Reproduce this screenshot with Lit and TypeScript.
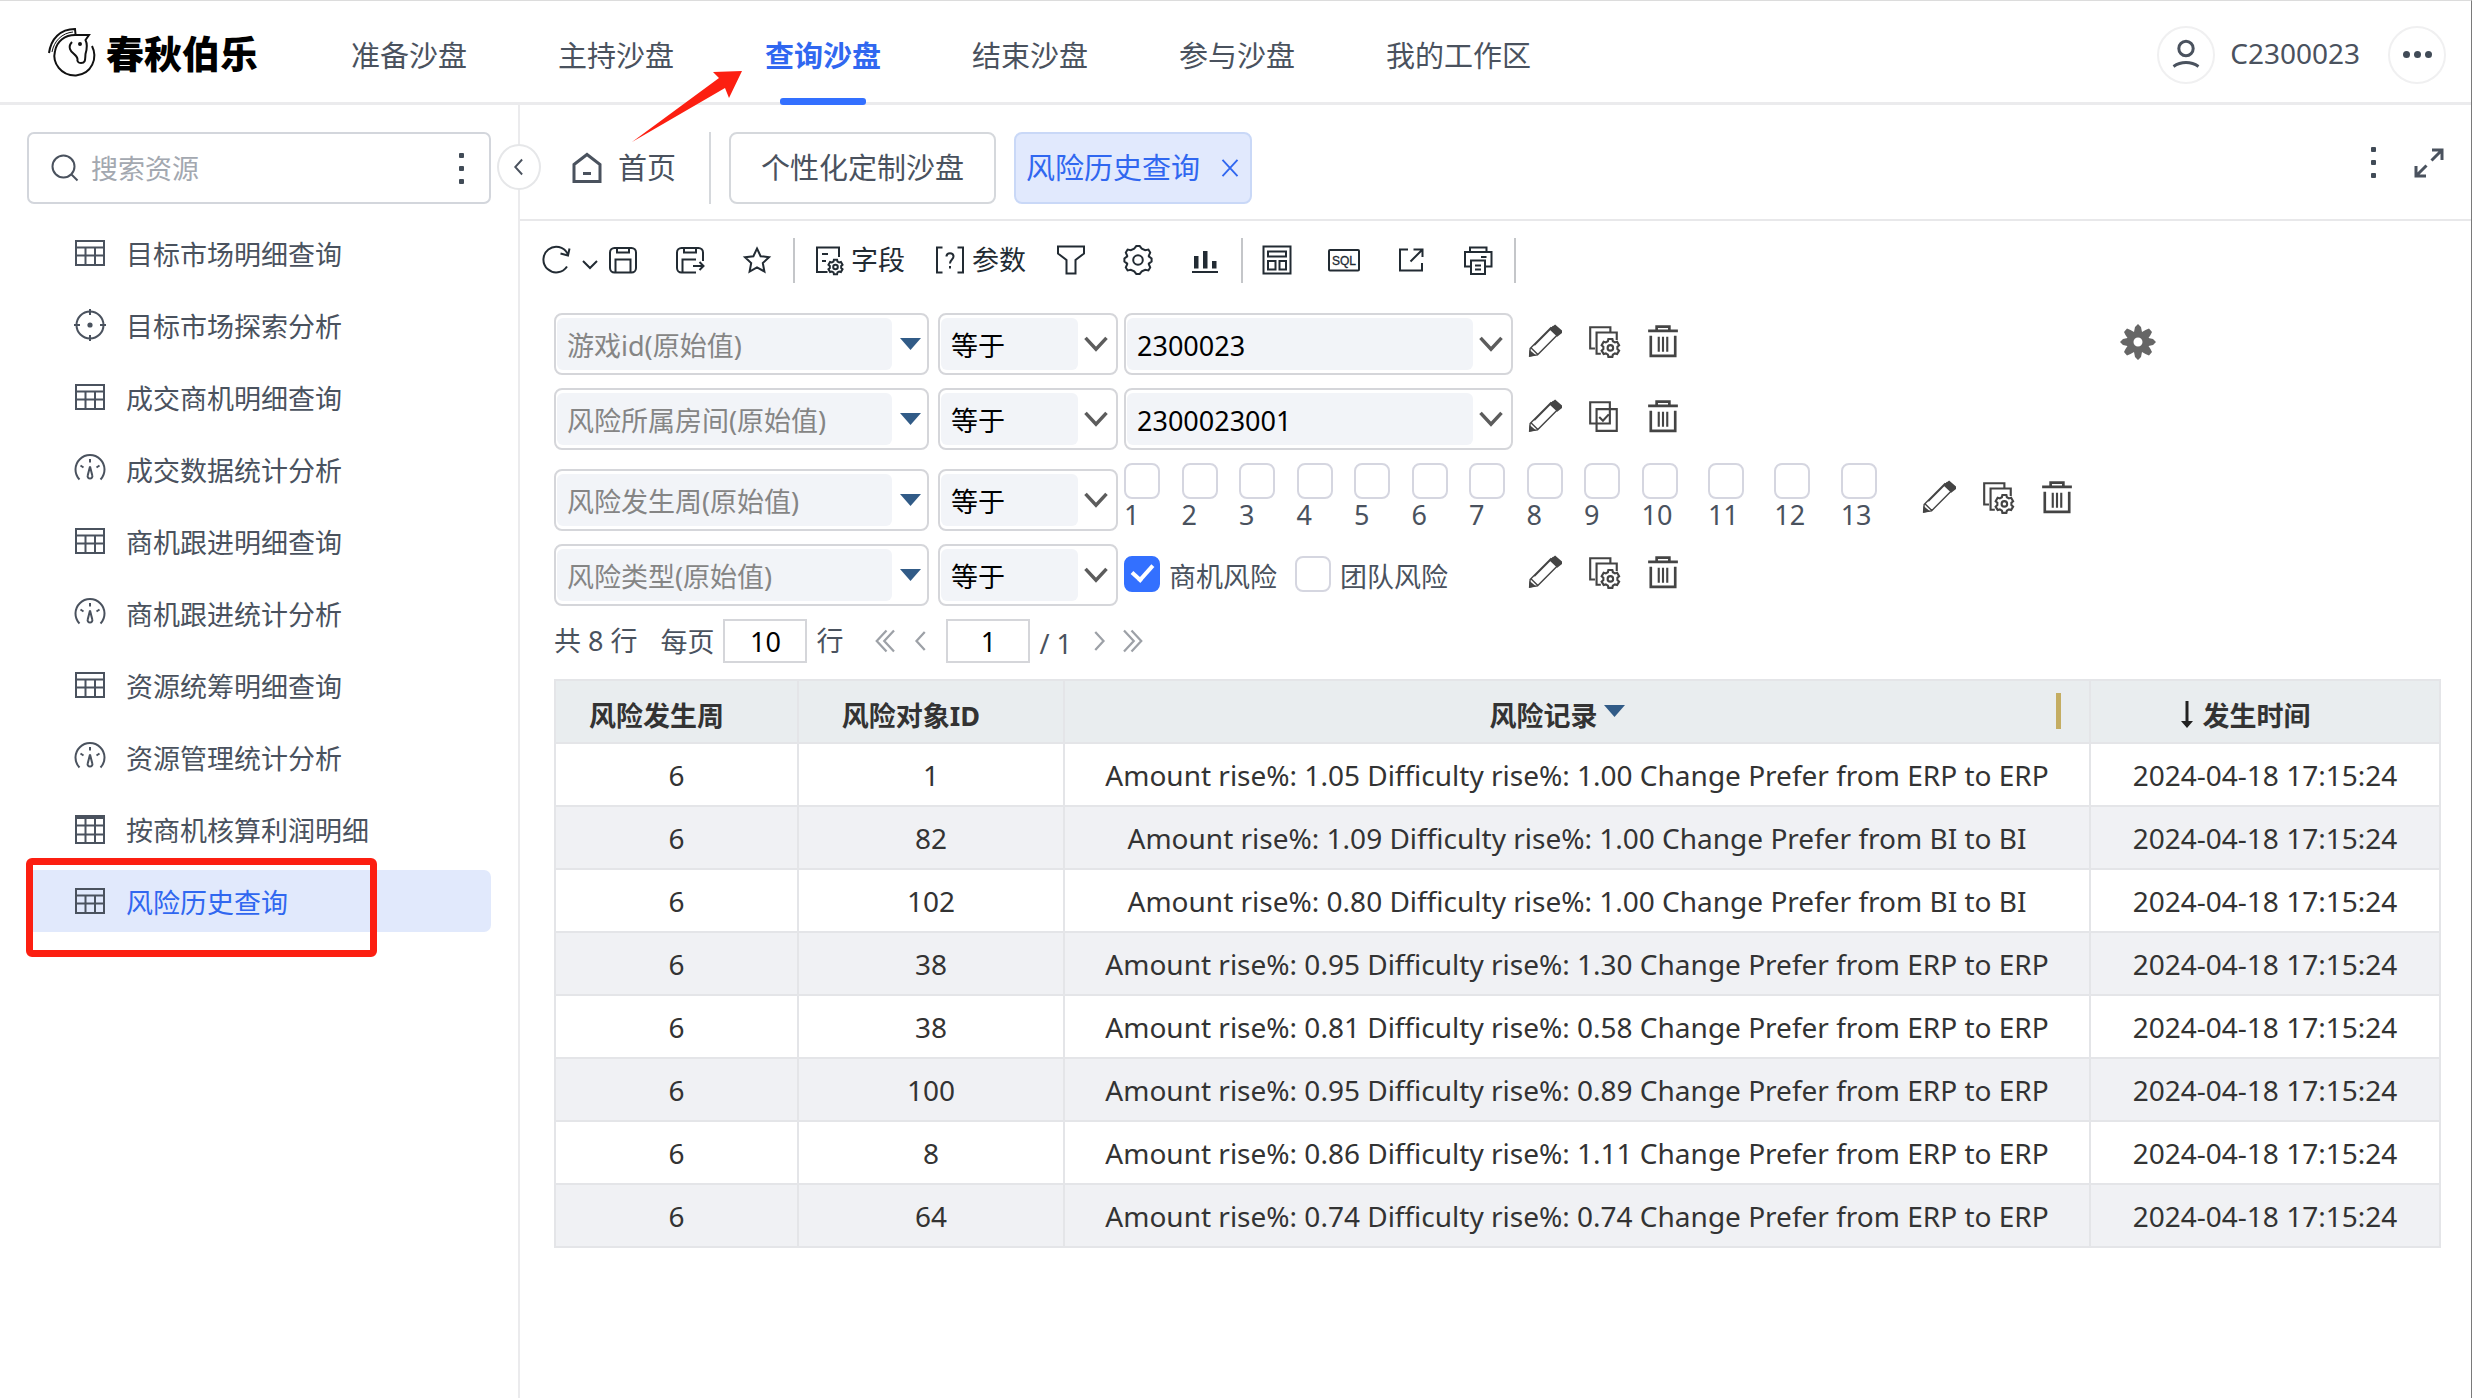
import { LitElement, html, css, svg, nothing } from "lit";
import type { TemplateResult, SVGTemplateResult } from "lit";
import { customElement, state } from "lit/decorators.js";
import { classMap } from "lit/directives/class-map.js";

const GEAR =
  "M12.2 4.6 L14.3 2 H17.7 L19.8 4.6 L23.2 6.2 L26.4 5.6 L28.2 8.6 L26.8 11.8 V12.4 L29.6 14.4 V17.6 L26.8 19.6 V20.2 L28.2 23.4 L26.4 26.4 L23.2 25.8 L19.8 27.4 L17.7 30 H14.3 L12.2 27.4 L8.8 25.8 L5.6 26.4 L3.8 23.4 L5.2 20.2 V19.6 L2.4 17.6 V14.4 L5.2 12.4 V11.8 L3.8 8.6 L5.6 5.6 L8.8 6.2 Z";

const cog = (cx: number, cy: number, r: number): string => {
  const pts: string[] = [];
  for (let i = 0; i < 6; i++) {
    const base = (i * Math.PI) / 3;
    for (const [da, k] of [[-0.36, 0.78], [-0.22, 1], [0.22, 1], [0.36, 0.78]]) {
      pts.push(`${(cx + Math.sin(base + da) * r * k).toFixed(2)} ${(cy - Math.cos(base + da) * r * k).toFixed(2)}`);
    }
  }
  return "M" + pts.join(" L") + " Z";
};

const ICONS: Record<string, SVGTemplateResult> = {
  table: svg`<path d="M2 4H30V28H2ZM2 10.500H30M2 18.500H30M11.500 10.500V28M21 10.500V28"/>`,
  grid: svg`<path d="M2 3H30V30H2ZM2 12.500H30M2 21.500H30M11.500 5V30M21 5V30"/><path d="M2 4H30" stroke-width="4"/>`,
  target: svg`<circle cx="16" cy="16" r="13.500"/><path d="M16 0V6M16 26V32M0 16H6M26 16H32"/><circle cx="16" cy="16" r="2.600" fill="currentColor" stroke="none"/>`,
  gauge: svg`<path d="M5.500 26.500A14.500 14.500 0 1 1 26.500 26.500M16 6V9.500M6.500 12.500L9.500 14.500M25.500 12.500L22.500 14.500"/><path d="M16 13.500L18.300 22.500A2.400 2.400 0 1 1 13.700 22.500Z"/>`,
  search: svg`<circle cx="14.500" cy="14.500" r="11"/><path d="M22.500 22.500L28.500 28.500"/>`,
  user: svg`<circle cx="16" cy="9.500" r="7.200"/><path d="M3.500 27.500C11 22.300 21 22.300 28.500 27.500"/>`,
  home: svg`<path d="M3 12.500L16 2.500L29 12.500V29.500H3ZM12 21.500H20"/>`,
  expand: svg`<path d="M19 3H29V13M29 3L18.500 13.500M13 29H3V19M3 29L13.500 18.500"/>`,
  refresh: svg`<path d="M27 22.500A12.800 12.800 0 1 1 27.500 9.500M29.500 4.500L28 11.500L20.500 9.500"/>`,
  save: svg`<rect x="3" y="4" width="26" height="24.500" rx="4.500"/><path d="M10 4V8.500H22V4M8.500 28V15.500H23.500V28"/>`,
  saveAs: svg`<path d="M22 28.500H7.500A4.500 4.500 0 0 1 3 24V8.500A4.500 4.500 0 0 1 7.500 4H24.500A4.500 4.500 0 0 1 29 8.500V17M10 4V8.500H22V4M8.500 28V15.500H22M19 22H29.500M25.500 18L29.500 22L25.500 26"/>`,
  star: svg`<path d="M16 4.500L19.600 12.200L28 13.200L21.800 19L23.400 27.500L16 23.300L8.600 27.500L10.200 19L4 13.200L12.400 12.200Z"/>`,
  fields: svg`<path d="M14.500 28H4V3.500H26V13M9 10H15M9 17H13"/><path d="${cog(22.5, 23, 7.4)}"/><circle cx="22.500" cy="23" r="2.300"/>`,
  params: svg`<path d="M8.500 3.500H3V28.500H8.500M23.500 3.500H29V28.500H23.500M12.500 12.500C12.500 8 19.500 8 19.500 12.500C19.500 15.500 16 15.500 16 19.500M16 22V24.500"/>`,
  filter: svg`<path d="M3 2.500H29V9.500L20.500 16V29.500H11.500V16L3 9.500Z"/>`,
  gear: svg`<path d="${GEAR}"/><circle cx="16" cy="16" r="4.800"/>`,
  chart: svg`<path d="M3 28H29"/><path d="M5 12H9.500V24.500H5ZM14 7H18.500V24.500H14ZM23 17H27.500V24.500H23Z" fill="currentColor" stroke="none"/>`,
  layout: svg`<path d="M2.500 2.500H29.500V29.500H2.500ZM7 7.500H25V12.500H7ZM7 17H14.500V25.500H7ZM18.500 17H25V25.500H18.500Z"/>`,
  sql: svg`<rect x="1" y="6" width="30" height="20.500" rx="1"/><text x="16" y="20.500" text-anchor="middle" font-size="12" font-family="Liberation Sans, sans-serif" fill="currentColor" stroke-width="0.300">SQL</text>`,
  share: svg`<path d="M13 5.500H5V26.500H27V19M18.500 5.500H27.500V13M27 6L15.500 17.500"/>`,
  print: svg`<path d="M8 8V3.500H24.500V8M9 22.500H3V8H29.500V22.500H23M19 13H24.500M9 16.500H23V30H9ZM13 21.500H19M13 25.500H19"/>`,
  pencil: svg`<path d="M2 23L21.500 3.500L28.500 9.500L9 29L1.500 30Z M3 22.500L9.500 29M6 20L24 2" stroke-width="1.300"/><path d="M20 5L25.500 0.500L32 6V8.500L27.500 12Z M1.500 24.500L7.500 29.500L1 31Z" fill="currentColor" stroke="none"/>`,
  copyGear: svg`<path d="M7.500 23H3V3H22V7.500M13 28H9V8H28V15"/><path d="${cog(22, 22.5, 8.6)}"/><circle cx="22" cy="22.500" r="2.600"/>`,
  copyCheck: svg`<path d="M3 3H21.500V23H3ZM9 9.500H28V30H9ZM11.500 17L15 20.500L20.500 14.500"/>`,
  trash: svg`<path d="M2 6.500H30M10 6V2.500H22V6M4.500 11V30H27.500V11" stroke-width="2.500"/><path d="M12 12V26M16 12V26M20 12V26"/>`,
  chevronDown: svg`<path d="M4 9L16 22L28 9"/>`,
  chevronLeft: svg`<path d="M21 4L10 16L21 28"/>`,
  chevronRight: svg`<path d="M11 4L22 16L11 28"/>`,
  first: svg`<path d="M18 2L5 16L18 30M28 2L15 16L28 30"/>`,
  last: svg`<path d="M4 2L17 16L4 30M14 2L27 16L14 30"/>`,
  close: svg`<path d="M4 3L28 29M28 3L4 29"/>`,
};

const icon = (name: string, cls = ""): TemplateResult =>
  html`<svg class="icon ${cls}" viewBox="0 0 32 32" aria-hidden="true">${ICONS[name]}</svg>`;

const MENU = ["准备沙盘", "主持沙盘", "查询沙盘", "结束沙盘", "参与沙盘", "我的工作区"];

const RESOURCES: [string, string][] = [
  ["table", "目标市场明细查询"],
  ["target", "目标市场探索分析"],
  ["table", "成交商机明细查询"],
  ["gauge", "成交数据统计分析"],
  ["table", "商机跟进明细查询"],
  ["gauge", "商机跟进统计分析"],
  ["table", "资源统筹明细查询"],
  ["gauge", "资源管理统计分析"],
  ["grid", "按商机核算利润明细"],
  ["table", "风险历史查询"],
];

const erp = (a: string, d: string) => `Amount rise%: ${a} Difficulty rise%: ${d} Change Prefer from ERP to ERP`;
const bi = (a: string, d: string) => `Amount rise%: ${a} Difficulty rise%: ${d} Change Prefer from BI to BI`;

const ROWS: [number, string][] = [
  [1, erp("1.05", "1.00")],
  [82, bi("1.09", "1.00")],
  [102, bi("0.80", "1.00")],
  [38, erp("0.95", "1.30")],
  [38, erp("0.81", "0.58")],
  [100, erp("0.95", "0.89")],
  [8, erp("0.86", "1.11")],
  [64, erp("0.74", "0.74")],
];

@customElement("app-root")
export class AppRoot extends LitElement {
  @state() private menu = "查询沙盘";
  @state() private resource = "风险历史查询";

  static styles = css`
    :host {
      display: flex;
      flex-direction: column;
      min-height: 100vh;
      box-sizing: border-box;
      border-top: 1px solid #dcdcdc;
      border-right: 1px solid #7a7a7a;
      background: #fff;
      color: #4a525e;
      font-family: "Noto Sans", "Noto Sans CJK SC", sans-serif;
      font-size: 27px;
      line-height: 36px;
    }
    * { box-sizing: border-box; }
    button, input, select { font: inherit; color: inherit; margin: 0; }
    button { padding: 0; border: 0; background: none; cursor: pointer; display: inline-flex; align-items: center; justify-content: center; }
    a { color: inherit; text-decoration: none; }
    .icon { width: 32px; height: 32px; flex: none; fill: none; stroke: currentColor; stroke-width: 2; display: block; }
    .icon.s28 { width: 28px; height: 28px; }
    .icon.s24 { width: 24px; height: 24px; }
    .icon.s20 { width: 20px; height: 20px; }
    .icon.bold { stroke-width: 3; }

    .header { display: flex; align-items: center; height: 104px; padding: 0 25px 0 48px; border-bottom: 3px solid #ebebed; position: relative; }
    .brand { display: flex; align-items: center; gap: 8px; width: 303px; color: #000; font-size: 38px; line-height: 56px; font-weight: 900; font-family: "Noto Sans CJK SC", sans-serif; }
    .brand-mark { width: 50px; height: 50px; fill: none; stroke: #111; stroke-width: 2; }
    .menu { display: flex; align-self: stretch; gap: 91px; flex: 1; font-size: 29px; }
    .menu a { display: flex; flex-direction: column; align-items: center; padding-top: 35px; line-height: 40px; }
    .menu a.active { color: #3067f0; font-weight: 700; }
    .menu a.active::after { content: ""; flex: none; width: 86px; height: 7px; margin-top: 22px; border-radius: 3px; background: #3370ff; }
    .account { display: flex; align-items: center; font-size: 28px; padding-top: 6px; }
    .round { width: 58px; height: 58px; border: 2px solid #f0f0f1; border-radius: 50%; display: flex; align-items: center; justify-content: center; }
    .account-name { padding: 0 28px 4px 15px; }
    .arrow { position: absolute; left: 628px; top: 64px; width: 120px; height: 84px; z-index: 2; fill: #fc1f11; }

    .body { display: flex; flex: 1; }
    .sidebar { width: 520px; flex: none; border-right: 2px solid #ebebed; padding: 27px 27px 0; position: relative; }
    .search { display: flex; align-items: center; gap: 10px; height: 72px; padding: 0 20px 0 20px; border: 2px solid #d3d6dc; border-radius: 7px; }
    .search input { flex: 1; min-width: 0; border: 0; outline: 0; background: none; padding: 2px 0 0; }
    .search input::placeholder { color: #a3a8b0; opacity: 1; }
    .dots { display: flex; flex-direction: column; gap: 8px; width: 16px; align-items: center; }
    .dots i { width: 5px; height: 5px; border-radius: 1px; background: #414b57; }
    .dots.row { flex-direction: row; width: auto; gap: 4px; }
    .dots.row i { width: 7px; height: 7px; border-radius: 50%; }
    .collapse { position: absolute; right: -23px; top: 39px; width: 44px; height: 46px; border: 2px solid #e6e7e9; border-radius: 50%; background: #fff; z-index: 1; }
    .resources { list-style: none; margin: 18px 0 0; padding: 0; display: flex; flex-direction: column; gap: 10px; }
    .resources li { position: relative; }
    .resources a { display: flex; align-items: center; gap: 20px; height: 62px; padding-left: 47px; border-radius: 7px; }
    .resources span { padding-top: 3px; }
    .resources a.active { background: #e1e9fc; }
    .resources a.active span { color: #3067f0; }
    .mark { position: absolute; left: -1px; top: -12px; width: 351px; height: 99px; border: 7px solid #fc1f11; border-radius: 6px; pointer-events: none; }

    .main { flex: 1; min-width: 0; }
    .tabs { display: flex; align-items: center; height: 116px; padding: 11px 26px 0 51px; border-bottom: 2px solid #e8e8ea; font-size: 29px; }
    .tab-home { display: flex; align-items: center; gap: 15px; padding-right: 33px; height: 72px; border-right: 2px solid #d5d8dc; margin-right: 18px; }
    .tab { display: flex; align-items: center; height: 72px; border: 2px solid #d5d8dc; border-radius: 8px; padding: 0 30px; margin-right: 18px; }
    .tab.active { background: #e1e9fd; border-color: #c9d8f7; color: #3067f0; padding: 0 10px; gap: 20px; }
    .tab-tools { margin-left: auto; display: flex; align-items: flex-start; gap: 32px; height: 42px; }

    .toolbar { display: flex; align-items: center; height: 78px; padding-left: 20px; color: #222b33; }
    .group { display: flex; align-items: center; gap: 35px; }
    .group.text { gap: 29px; margin-right: 29px; }
    .text button { gap: 6px; }
    .refresh { gap: 10px; margin-right: -26px; }
    .rule { width: 2px; height: 45px; background: #c4c6c9; margin: 0 18px 0 20px; }

    .content { padding: 14px 30px 40px 34px; }
    .filters { display: flex; flex-direction: column; gap: 13px; }
    .filter { display: flex; align-items: flex-end; }
    .box { display: flex; align-items: center; height: 62px; border: 2px solid #d5d6da; border-radius: 8px; padding: 4px 6px 4px 1px; gap: 4px; }
    .box select { flex: 1; min-width: 0; height: 52px; appearance: none; border: 0; border-radius: 6px; outline: 0; background: #f2f4f8; padding: 4px 0 0 10px; color: #000; }
    .box.field { width: 375px; margin-right: 9px; gap: 8px; }
    .box.field select { color: #858585; }
    .box.op { width: 180px; margin-right: 6px; }
    .box .icon { color: #5c5c5c; stroke-width: 4; }
    .tri { width: 21px; height: 12px; fill: #315b87; flex: none; }
    .value { width: 389px; }
    .value .box { width: 100%; }
    .actions { display: flex; gap: 25px; height: 62px; align-items: center; padding: 0 0 6px 15px; color: #444; }
    .actions .icon { width: 34px; height: 34px; }
    .settings { margin-left: auto; margin-right: 285px; height: 62px; padding-bottom: 4px; }
    .settings svg { width: 36px; height: 36px; fill: #666; }
    .weeks { display: grid; width: 783px; grid-template-columns: repeat(9, 13fr) repeat(4, 15fr); }
    .weeks label { display: flex; flex-direction: column; line-height: 32px; }
    .types { display: flex; align-items: center; height: 62px; gap: 18px; }
    .types label { display: flex; align-items: center; gap: 9px; }
    .types span { padding-top: 3px; }
    .types .check { margin-bottom: 3px; }
    .check { appearance: none; width: 36px; height: 36px; border: 2px solid #d5d6e0; border-radius: 8px; background: #fff; display: grid; place-items: center; }
    .check:checked { background: #3370ff; border-color: #3370ff; }
    .check:checked::after { content: ""; width: 9px; height: 17px; border: solid #fff; border-width: 0 4px 4px 0; transform: translateY(-3px) rotate(42deg); }

    .pager { display: flex; align-items: center; height: 44px; margin: 13px 0 16px; }
    .pager input { width: 84px; height: 44px; border: 2px solid #d5d6da; text-align: center; padding: 0; color: #000; margin: 0 9px; outline: 0; }
    .pager .per { margin-left: 23px; }
    .pager .total { padding-top: 6px; }
    .pager button { color: #9da1a7; }
    .pager .nav { display: flex; gap: 12px; margin-left: 30px; margin-right: 4px; }
    .pager .nav.end { margin-left: 15px; gap: 10px; }

    table { width: 100%; border-collapse: collapse; table-layout: fixed; color: #333; }
    .c1 { width: 243px; }
    .c2 { width: 266px; }
    .c4 { width: 350px; }
    th, td { height: 63px; padding: 0; border: 2px solid #e4e5e8; text-align: center; }
    td { font-size: 28px; }
    th { background: #e9edef; padding: 8px 40px 0 0; position: relative; font-weight: 700; }
    tbody tr:nth-child(even) { background: #f0f1f4; }
    th .tri { margin-left: 6px; vertical-align: 9px; }
    .sort { width: 14px; height: 28px; fill: none; stroke: #222; stroke-width: 3; vertical-align: -3px; margin-right: 9px; }
    .grip { position: absolute; right: 28px; top: 12px; width: 5px; height: 36px; background: #c4ad62; }
  `;

  private tri = () => html`<svg class="tri" viewBox="0 0 21 12" aria-hidden="true"><path d="M0 0H21L10.5 12Z" /></svg>`;

  private tool(name: string, label: string) {
    return html`<button aria-label=${label}>${icon(name)}</button>`;
  }

  private filter(field: string, value: unknown, middle: string, extra: unknown = nothing) {
    return html`
      <div class="filter">
        <label class="box field"><select aria-label="字段"><option>${field}</option></select>${this.tri()}</label>
        <label class="box op"><select aria-label="运算符"><option>等于</option></select>${icon("chevronDown", "s28")}</label>
        ${value}
        <div class="actions">
          ${this.tool("pencil", "编辑")}${this.tool(middle, "选项")}${this.tool("trash", "删除")}
        </div>
        ${extra}
      </div>`;
  }

  private dropdown(value: string) {
    return html`<div class="value"><label class="box"><select aria-label="值"><option>${value}</option></select>${icon("chevronDown", "s28")}</label></div>`;
  }

  render() {
    return html`
      <header class="header">
        <div class="brand">
          <svg class="brand-mark" viewBox="0 0 50 50" aria-hidden="true">
            <path d="M1 26C3 12 12 2 27 2L27.500 7" />
            <path d="M4 25C6 14 14 6 25 5" stroke-width="1" />
            <path d="M44 19C50 31 44 47 28 48.500C13 49 4 36 7 24C9 14 17 8 27 8H41L37.500 13C40 18 39 22 37.500 27C37 32 38 36 33 36C30 36 29 34 29.500 32C29 28 23 26 22 22C21 19 22 17 24 15" />
            <circle cx="32" cy="17" r="1" />
          </svg>
          <span>春秋伯乐</span>
        </div>
        <nav class="menu">
          ${MENU.map((m) => html`<a href="#" class=${classMap({ active: m === this.menu })} @click=${(e: Event) => { e.preventDefault(); this.menu = m; }}>${m}</a>`)}
        </nav>
        <div class="account">
          <span class="round">${icon("user", "bold")}</span>
          <span class="account-name">C2300023</span>
          <button class="round" aria-label="更多"><span class="dots row"><i></i><i></i><i></i></span></button>
        </div>
        <svg class="arrow" viewBox="0 0 120 84" aria-hidden="true"><path d="M4 77L91 13L85 7L114 6L101 33L97 23Z" /></svg>
      </header>
      <div class="body">
        <aside class="sidebar">
          <div class="search">
            ${icon("search")}
            <input type="text" placeholder="搜索资源" aria-label="搜索资源" />
            <button class="dots" aria-label="选项"><i></i><i></i><i></i></button>
          </div>
          <button class="collapse" aria-label="收起">${icon("chevronLeft", "s20 bold")}</button>
          <ul class="resources">
            ${RESOURCES.map(([i, name]) => html`
              <li>
                <a href="#" class=${classMap({ active: name === this.resource })} @click=${(e: Event) => { e.preventDefault(); this.resource = name; }}>${icon(i)}<span>${name}</span></a>
                ${name === "风险历史查询" ? html`<div class="mark"></div>` : nothing}
              </li>`)}
          </ul>
        </aside>
        <main class="main">
          <div class="tabs">
            <a class="tab-home" href="#">${icon("home", "bold")}<span>首页</span></a>
            <a class="tab" href="#">个性化定制沙盘</a>
            <div class="tab active"><span>风险历史查询</span><button aria-label="关闭">${icon("close", "s20 bold")}</button></div>
            <div class="tab-tools">
              <button class="dots" aria-label="更多"><i></i><i></i><i></i></button>
              <button aria-label="全屏">${icon("expand", "bold")}</button>
            </div>
          </div>
          <div class="toolbar">
            <div class="group">
              <button class="refresh" aria-label="刷新">${icon("refresh")}<svg class="icon" style="width:16px" viewBox="0 0 16 32"><path d="M1 17L8 24L15 17" /></svg></button>
              ${this.tool("save", "保存")}${this.tool("saveAs", "另存为")}${this.tool("star", "收藏")}
            </div>
            <div class="rule"></div>
            <div class="group text">
              <button>${icon("fields")}字段</button>
              <button>${icon("params")}参数</button>
            </div>
            <div class="group">
              ${this.tool("filter", "过滤")}${this.tool("gear", "设置")}${this.tool("chart", "图表")}
            </div>
            <div class="rule"></div>
            <div class="group">
              ${this.tool("layout", "布局")}${this.tool("sql", "SQL")}${this.tool("share", "导出")}${this.tool("print", "打印")}
            </div>
            <div class="rule"></div>
          </div>
          <div class="content">
            <div class="filters">
              ${this.filter("游戏id(原始值)", this.dropdown("2300023"), "copyGear", html`
                <button class="settings" aria-label="参数设置">
                  <svg viewBox="0 0 36 36"><path fill-rule="evenodd" d="M15 3L18 0L21 3L22 8L25.500 6L29 4.500L32 8L30.500 11L28.500 14L33 15L36 18L33 21L28.500 22L30.500 25L32 28L29 31.500L25.500 30L22 28L21 33L18 36L15 33L14 28L10.500 30L7 31.500L4 28L5.500 25L7.500 22L3 21L0 18L3 15L7.500 14L5.500 11L4 8L7 4.500L10.500 6L14 8ZM18 13.500A4.500 4.500 0 1 0 18 22.500A4.500 4.500 0 1 0 18 13.500Z" /></svg>
                </button>`)}
              ${this.filter("风险所属房间(原始值)", this.dropdown("2300023001"), "copyCheck")}
              ${this.filter("风险发生周(原始值)", html`
                <div class="weeks">
                  ${Array.from({ length: 13 }, (_, i) => html`<label><input class="check" type="checkbox" /><span>${i + 1}</span></label>`)}
                </div>`, "copyGear")}
              ${this.filter("风险类型(原始值)", html`
                <div class="value types">
                  <label><input class="check" type="checkbox" checked /><span>商机风险</span></label>
                  <label><input class="check" type="checkbox" /><span>团队风险</span></label>
                </div>`, "copyGear")}
            </div>
            <div class="pager">
              <span>共 8 行</span>
              <label class="per">每页<input type="text" value="10" /></label>
              <span>行</span>
              <div class="nav">
                <button aria-label="首页">${icon("first", "s24 bold")}</button>
                <button aria-label="上一页">${icon("chevronLeft", "s24 bold")}</button>
              </div>
              <input type="text" value="1" aria-label="页码" />
              <span class="total">/ 1</span>
              <div class="nav end">
                <button aria-label="下一页">${icon("chevronRight", "s24 bold")}</button>
                <button aria-label="末页">${icon("last", "s24 bold")}</button>
              </div>
            </div>
            <table>
              <colgroup><col class="c1" /><col class="c2" /><col /><col class="c4" /></colgroup>
              <thead>
                <tr>
                  <th>风险发生周</th>
                  <th>风险对象ID</th>
                  <th>风险记录${this.tri()}<span class="grip"></span></th>
                  <th><svg class="sort" viewBox="0 0 14 28" aria-hidden="true"><path d="M7 0V25" /><path d="M1 20L7 27L13 20Z" fill="#222" stroke="none" /></svg>发生时间</th>
                </tr>
              </thead>
              <tbody>
                ${ROWS.map(([id, text]) => html`<tr><td>6</td><td>${id}</td><td>${text}</td><td>2024-04-18 17:15:24</td></tr>`)}
              </tbody>
            </table>
          </div>
        </main>
      </div>
    `;
  }
}
